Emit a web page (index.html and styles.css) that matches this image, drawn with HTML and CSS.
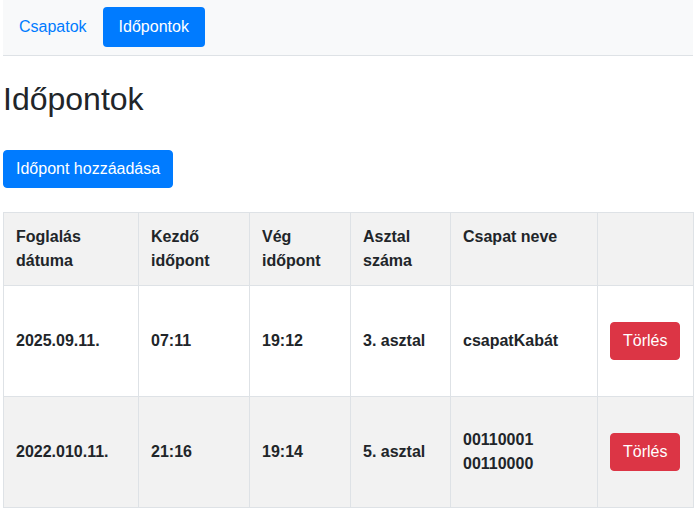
FILE: index.html
```html
<!DOCTYPE html>
<html lang="hu">
<head>
<meta charset="utf-8">
<title>Időpontok</title>
<link rel="stylesheet" href="styles.css">
</head>
<body>
<div class="page">
  <nav class="navbar">
    <a class="nav-link" href="#">Csapatok</a>
    <a class="nav-link active" href="#">Időpontok</a>
  </nav>
  <h2 class="title">Időpontok</h2>
  <button class="btn btn-primary">Időpont hozzáadása</button>
  <table class="table">
    <colgroup>
      <col class="c1"><col class="c2"><col class="c3"><col class="c4"><col class="c5"><col class="c6">
    </colgroup>
    <tbody>
      <tr class="head">
        <th>Foglalás dátuma</th>
        <th>Kezdő időpont</th>
        <th>Vég időpont</th>
        <th>Asztal száma</th>
        <th>Csapat neve</th>
        <th></th>
      </tr>
      <tr>
        <td>2025.09.11.</td>
        <td>07:11</td>
        <td>19:12</td>
        <td>3. asztal</td>
        <td>csapatKabát</td>
        <td><button class="btn btn-danger">Törlés</button></td>
      </tr>
      <tr class="striped">
        <td>2022.010.11.</td>
        <td>21:16</td>
        <td>19:14</td>
        <td>5. asztal</td>
        <td>00110001 00110000</td>
        <td><button class="btn btn-danger">Törlés</button></td>
      </tr>
    </tbody>
  </table>
</div>
</body>
</html>
```
FILE: styles.css
```css
* { box-sizing: border-box; }
html, body {
  margin: 0;
  padding: 0;
  background: #fff;
}
body {
  font-family: "Liberation Sans", Arial, sans-serif;
  font-size: 16px;
  line-height: 1.5;
  color: #212529;
}
.page {
  margin-left: 3px;
  width: 690px;
}
.navbar {
  display: flex;
  align-items: center;
  background: #f8f9fa;
  border-bottom: 1px solid #dee2e6;
  padding: 7px 0 8px;
  height: 56px;
}
.nav-link {
  display: block;
  padding: 8px 16px;
  color: #007bff;
  text-decoration: none;
  border-radius: 4px;
}
.nav-link.active {
  background: #007bff;
  color: #fff;
}
.title {
  font-size: 32px;
  font-weight: 500;
  line-height: 1.2;
  margin: 24px 0 32px;
}
.btn {
  display: inline-block;
  font-family: inherit;
  font-size: 16px;
  line-height: 1.5;
  padding: 6px 12px;
  border: 1px solid transparent;
  border-radius: 4px;
  color: #fff;
  cursor: pointer;
}
.btn-primary {
  background: #007bff;
  border-color: #007bff;
}
.btn-danger {
  background: #dc3545;
  border-color: #dc3545;
  margin: 24px 0;
}
.table {
  margin-top: 24px;
  width: 690px;
  border-collapse: collapse;
  table-layout: fixed;
}
.c1 { width: 135px; }
.c2 { width: 111px; }
.c3 { width: 101px; }
.c4 { width: 100px; }
.c5 { width: 147px; }
.c6 { width: 96px; }
.table th, .table td {
  border: 1px solid #dee2e6;
  padding: 12px;
  font-weight: 700;
  text-align: left;
}
.table th { vertical-align: top; }
.table td { vertical-align: middle; }
.head, .striped { background: #f2f2f2; }
```
